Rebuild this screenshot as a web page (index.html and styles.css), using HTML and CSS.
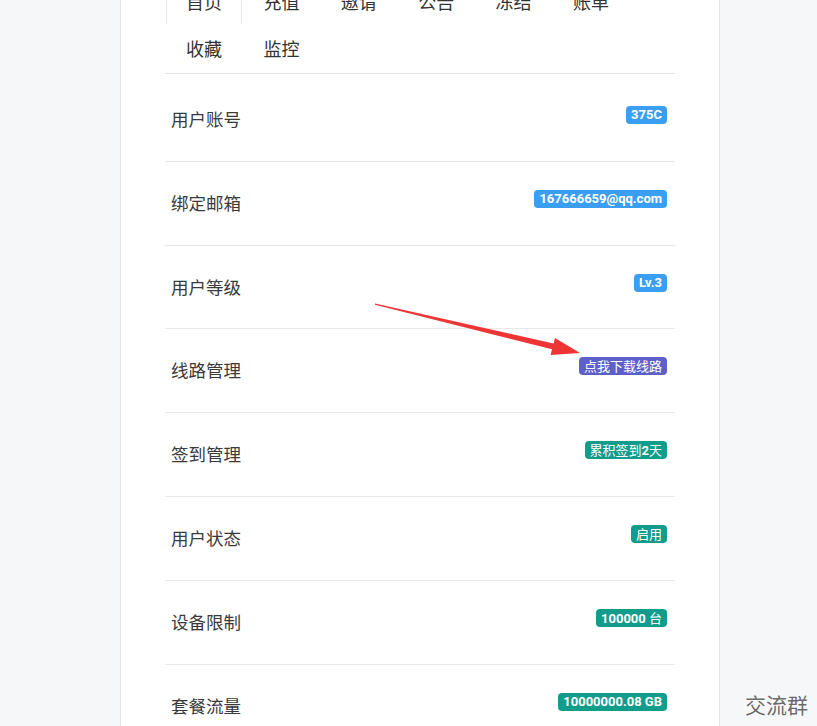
FILE: index.html
```html
<!DOCTYPE html>
<html lang="zh-CN">
<head>
    <meta charset="UTF-8">
    <meta name="viewport" content="width=device-width, initial-scale=1.0">
    <title>用户中心</title>
    <link rel="stylesheet" href="styles.css">
</head>
<body>
    <div class="card">
        <ul class="tabs">
            <li class="tab active">首页</li>
            <li class="tab">充值</li>
            <li class="tab">邀请</li>
            <li class="tab">公告</li>
            <li class="tab">冻结</li>
            <li class="tab">账单</li>
            <li class="tab">收藏</li>
            <li class="tab">监控</li>
        </ul>
        <ul class="info-list">
            <li class="info-row"><span class="label">用户账号</span><span class="badge blue">375C</span></li>
            <li class="info-row"><span class="label">绑定邮箱</span><span class="badge blue">167666659@qq.com</span></li>
            <li class="info-row"><span class="label">用户等级</span><span class="badge blue">Lv.3</span></li>
            <li class="info-row"><span class="label">线路管理</span><span class="badge purple"><span class="cn">点我下载线路</span></span></li>
            <li class="info-row"><span class="label">签到管理</span><span class="badge green"><span class="cn">累积签到</span>2<span class="cn">天</span></span></li>
            <li class="info-row"><span class="label">用户状态</span><span class="badge green"><span class="cn">启用</span></span></li>
            <li class="info-row"><span class="label">设备限制</span><span class="badge green">100000 <span class="cn">台</span></span></li>
            <li class="info-row"><span class="label">套餐流量</span><span class="badge green">10000000.08 GB</span></li>
        </ul>
    </div>

    <!-- 标注箭头 -->
    <svg class="arrow" width="817" height="726" viewBox="0 0 817 726">
        <polygon points="375,303.5 553.6,343.5 555,337.9 580,353 550.6,355 552,349.3 375,304.7" fill="#ee3535"/>
    </svg>

    <div class="watermark">交流群</div>
</body>
</html>
```

FILE: styles.css
```css
body {
    margin: 0;
    background-color: #f6f7f9;
    font-family: "Noto Sans CJK SC", "Noto Sans", sans-serif;
    color: #333;
    height: 726px;
    overflow: hidden;
    position: relative;
}
ul {
    list-style: none;
    margin: 0;
    padding: 0;
}
.card {
    box-sizing: border-box;
    width: 600px;
    margin: -23px 0 0 120px;
    padding: 0 44px;
    background-color: #ffffff;
    border-left: 1px solid #e4e4e4;
    border-right: 1px solid #e4e4e4;
    min-height: 800px;
}
.tabs {
    display: flex;
    flex-wrap: wrap;
    border-bottom: 1px solid #e6e6e6;
    padding-left: 1px;
}
.tab {
    font-size: 18px;
    line-height: 46px;
    height: 46px;
    padding: 0 19px;
    margin-right: 1.4px;
    border: 1px solid transparent;
    border-bottom: none;
    color: #333;
}
.tab.active {
    border-color: #e4e4e4;
}
.tabs .tab:nth-child(n+7) {
    height: 48px;
}
.info-list {
    margin-top: 4px;
}
.info-row {
    display: flex;
    justify-content: space-between;
    align-items: flex-start;
    padding: 30px 8px 30.8px 6px;
    border-bottom: 1px solid #e8e8e8;
}
.label {
    font-size: 17.5px;
    line-height: 22px;
    color: #3a3a3a;
}
.badge {
    margin-top: -2px;
    height: 18px;
    line-height: 18px;
    padding: 0 5px;
    border-radius: 4px;
    font-family: Roboto, "Noto Sans CJK SC", sans-serif;
    font-size: 13px;
    font-weight: 700;
    color: #ffffff;
    white-space: nowrap;
}
.badge .cn {
    font-family: "Noto Sans CJK SC", sans-serif;
    font-weight: 400;
}
.blue {
    background-color: #3a9ef2;
}
.purple {
    background-color: #5d60c9;
}
.green {
    background-color: #129c8b;
}
.arrow {
    position: absolute;
    left: 0;
    top: 0;
    pointer-events: none;
}
.watermark {
    position: absolute;
    right: 9px;
    bottom: 7px;
    font-size: 21px;
    color: #6a6a6a;
    text-shadow: 0 0 2px #fff, 0 0 2px #fff;
}
```
